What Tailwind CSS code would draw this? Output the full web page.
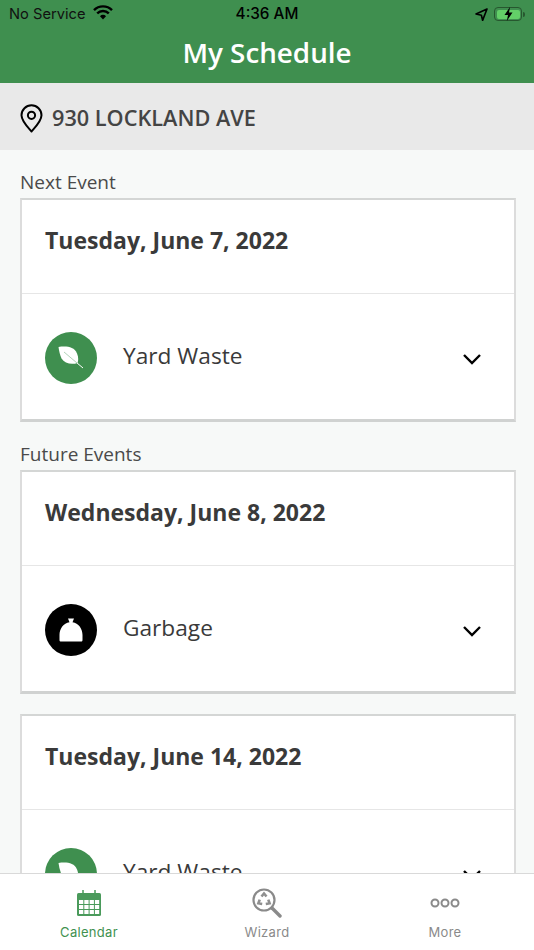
<!doctype html>
<html lang="en">
  <head>
    <meta charset="UTF-8" />
    <title>My Schedule</title>
    <script src="https://cdn.jsdelivr.net/npm/@tailwindcss/browser@4"></script>
  </head>

  <body class="w-[534px] h-[950px] overflow-hidden bg-[#f7f9f8] font-['Open_Sans',sans-serif] text-[#3a3a3a]">
    <div class="flex flex-col h-[950px]">
      <!-- green header with status bar -->
      <header class="h-[83px] shrink-0 bg-[#3f8f4f]">
        <div class="h-[28px] px-[9px] grid grid-cols-3 items-center text-[14.700px] text-black font-['Inter',sans-serif]">
          <div class="flex items-center gap-[7px]">
            <span class="text-[#111]">No Service</span>
            <svg width="20" height="15" viewBox="0 0 20 15" class="mb-[3px]">
              <path d="M1 5.2a12.6 12.6 0 0 1 18 0" fill="none" stroke="#000" stroke-width="2.4" />
              <path d="M4.2 8.4a8.2 8.2 0 0 1 11.6 0" fill="none" stroke="#000" stroke-width="2.4" />
              <path d="M7 11.2a4 4 0 0 1 6 0L10 14.4z" fill="#000" />
            </svg>
          </div>
          <div class="text-center font-medium text-[15.300px]">4:36 AM</div>
          <div class="flex items-center justify-end gap-[6px] pr-0">
            <svg width="13" height="13" viewBox="0 0 13 13">
              <path d="M12 1 1 6l5.4 1.2L7.6 12.4z" fill="none" stroke="#000" stroke-width="1.6" stroke-linejoin="round" />
            </svg>
            <div class="flex items-center">
              <div class="relative w-[28px] h-[14px] rounded-[4px] border border-[#27572f] p-[1.5px]">
                <div class="h-full rounded-[2px] bg-[#63cf68]"></div>
                <svg width="11" height="14" viewBox="0 0 11 14" class="absolute left-[8px] top-[-1px]">
                  <path d="M7 0 1.5 8H5l-1.2 6L9.5 5.6H6z" fill="#000" />
                </svg>
              </div>
              <div class="w-[2px] h-[5px] ml-[1px] rounded-r bg-[#27572f]"></div>
            </div>
          </div>
        </div>
        <h1 class="text-center text-white text-[27.800px] leading-[48px] font-semibold">My Schedule</h1>
      </header>

      <!-- address -->
      <div class="h-[67px] shrink-0 bg-[#e9e9e9] pl-[20px] pt-[3px] flex items-center gap-[9px]">
        <svg width="23" height="29" viewBox="0 0 23 29">
          <path d="M11.5 27.5C7 22.5 1.5 17 1.5 11.3a10 10 0 0 1 20 0c0 5.700-5.500 11.200-10 16.200z" fill="none" stroke="#000" stroke-width="2" stroke-linejoin="round" />
          <circle cx="11.500" cy="11.300" r="3.600" fill="none" stroke="#000" stroke-width="2" />
        </svg>
        <span class="text-[21.700px] font-semibold text-[#444]">930 LOCKLAND AVE</span>
      </div>

      <!-- schedule list -->
      <main class="flex-1 min-h-0 overflow-hidden pl-[20px] pr-[18px]">
        <h2 class="mt-[19px] text-[19px] leading-[26px] text-[#4a4a4a]">Next Event</h2>
        <section class="mt-[3px] h-[224px] bg-white border-x-2 border-t-2 border-b-[3px] border-x-[#dcdcdc] border-t-[#d4d6d5] border-b-[#d0d2d1]">
          <h3 class="h-[93px] pl-[23px] pt-[23px] text-[23px] leading-[34px] font-bold">Tuesday, June 7, 2022</h3>
          <div class="h-[126px] border-t border-[#e6e6e6] pl-[23px] pr-[32px] pt-[2px] flex items-center">
            <div class="w-[52px] h-[52px] rounded-full bg-[#3f8f4f] flex items-center justify-center">
              <svg width="28" height="24" viewBox="0 0 28 24">
                <path d="M1.500 1c8-1 15.500-.5 18.500 6.500 1.500 3.500 1.500 7 .5 9.500-6 2-13 .5-16-4.500C3 9 2 5 1.500 1z" fill="#fff" />
                <path d="M7 6l19 16" stroke="#fff" stroke-width="1" />
                <path d="M7 6l13 11" stroke="#3f8f4f" stroke-opacity=".4" stroke-width="1" />
              </svg>
            </div>
            <span class="ml-[26px] mb-[3px] text-[22.700px]">Yard Waste</span>
            <svg width="20" height="12" viewBox="0 0 20 12" class="ml-auto mt-[3px]">
              <path d="M2 2l8 8 8-8" fill="none" stroke="#000" stroke-width="2.400" />
            </svg>
          </div>
        </section>

        <h2 class="mt-[19px] text-[19px] leading-[26px] text-[#4a4a4a]">Future Events</h2>
        <section class="mt-[3px] h-[224px] bg-white border-x-2 border-t-2 border-b-[3px] border-x-[#dcdcdc] border-t-[#d4d6d5] border-b-[#d0d2d1]">
          <h3 class="h-[93px] pl-[23px] pt-[23px] text-[23px] leading-[34px] font-bold">Wednesday, June 8, 2022</h3>
          <div class="h-[126px] border-t border-[#e6e6e6] pl-[23px] pr-[32px] pt-[2px] flex items-center">
            <div class="w-[52px] h-[52px] rounded-full bg-black flex items-center justify-center">
              <svg width="26" height="26" viewBox="0 0 26 26">
                <path d="M10 1.500h6l-1.500 3.700C20.500 6.200 24.500 11.500 24.500 18v5c0 1-.6 1.500-1.500 1.500H3c-1 0-1.500-.5-1.500-1.500v-5c0-6.500 4-11.800 10-12.800z" fill="#fff" />
              </svg>
            </div>
            <span class="ml-[26px] mb-[3px] text-[22.700px]">Garbage</span>
            <svg width="20" height="12" viewBox="0 0 20 12" class="ml-auto mt-[3px]">
              <path d="M2 2l8 8 8-8" fill="none" stroke="#000" stroke-width="2.400" />
            </svg>
          </div>
        </section>

        <section class="mt-[20px] h-[224px] bg-white border-x-2 border-t-2 border-b-[3px] border-x-[#dcdcdc] border-t-[#d4d6d5] border-b-[#d0d2d1]">
          <h3 class="h-[93px] pl-[23px] pt-[23px] text-[23px] leading-[34px] font-bold">Tuesday, June 14, 2022</h3>
          <div class="h-[126px] border-t border-[#e6e6e6] pl-[23px] pr-[32px] pt-[2px] flex items-center">
            <div class="w-[52px] h-[52px] rounded-full bg-[#3f8f4f] flex items-center justify-center">
              <svg width="28" height="24" viewBox="0 0 28 24">
                <path d="M1.500 1c8-1 15.500-.5 18.500 6.500 1.500 3.500 1.500 7 .5 9.500-6 2-13 .5-16-4.500C3 9 2 5 1.500 1z" fill="#fff" />
              </svg>
            </div>
            <span class="ml-[26px] mb-[3px] text-[22.700px]">Yard Waste</span>
            <svg width="20" height="12" viewBox="0 0 20 12" class="ml-auto mt-[3px]">
              <path d="M2 2l8 8 8-8" fill="none" stroke="#000" stroke-width="2.400" />
            </svg>
          </div>
        </section>
      </main>

      <!-- tab bar -->
      <nav class="h-[77px] shrink-0 bg-white border-t border-[#d9d9d9] grid grid-cols-3 text-[13px] font-['Inter',sans-serif] tracking-[0.3px]">
        <div class="flex flex-col items-center text-[#3f9150]">
          <svg width="26" height="28" viewBox="0 0 26 28" class="mt-[15px]">
            <rect x="1" y="4" width="24" height="23" rx="1.500" fill="#4a9a5b" />
            <g fill="#fff">
              <rect x="3" y="11" width="4.300" height="4" /><rect x="8.300" y="11" width="4.300" height="4" /><rect x="13.600" y="11" width="4.300" height="4" /><rect x="18.900" y="11" width="4.300" height="4" />
              <rect x="3" y="16" width="4.300" height="4" /><rect x="8.300" y="16" width="4.300" height="4" /><rect x="13.600" y="16" width="4.300" height="4" /><rect x="18.900" y="16" width="4.300" height="4" />
              <rect x="3" y="21" width="4.300" height="4" /><rect x="8.300" y="21" width="4.300" height="4" /><rect x="13.600" y="21" width="4.300" height="4" /><rect x="18.900" y="21" width="4.300" height="4" />
            </g>
            <path d="M7 1v6M19 1v6" stroke="#4a9a5b" stroke-width="1.500" />
          </svg>
          <span class="mt-[6px]">Calendar</span>
        </div>
        <div class="flex flex-col items-center text-[#8a8a8a]">
          <svg width="32" height="30" viewBox="0 0 32 30" class="mt-[14px] mb-[-1px]">
            <circle cx="13" cy="12" r="10.500" fill="none" stroke="#8a8a8a" stroke-width="2.200" />
            <g fill="none" stroke="#8f8f8f" stroke-width="2.600">
              <path d="M10.500 8.500l2.500-3 2.500 3" />
              <path d="M10.500 8.500l2.500-3 2.500 3" transform="rotate(120 13 12)" />
              <path d="M10.500 8.500l2.500-3 2.500 3" transform="rotate(240 13 12)" />
            </g>
            <path d="M21 20l8 8" stroke="#8a8a8a" stroke-width="3.400" stroke-linecap="round" />
          </svg>
          <span class="mt-[6px]">Wizard</span>
        </div>
        <div class="flex flex-col items-center text-[#8a8a8a]">
          <svg width="30" height="10" viewBox="0 0 30 10" class="mt-[24px] mb-[9px]">
            <circle cx="5" cy="5" r="3.500" fill="none" stroke="#8a8a8a" stroke-width="2" />
            <circle cx="15" cy="5" r="3.500" fill="none" stroke="#8a8a8a" stroke-width="2" />
            <circle cx="25" cy="5" r="3.500" fill="none" stroke="#8a8a8a" stroke-width="2" />
          </svg>
          <span class="mt-[6px]">More</span>
        </div>
      </nav>
    </div>
  </body>
</html>
